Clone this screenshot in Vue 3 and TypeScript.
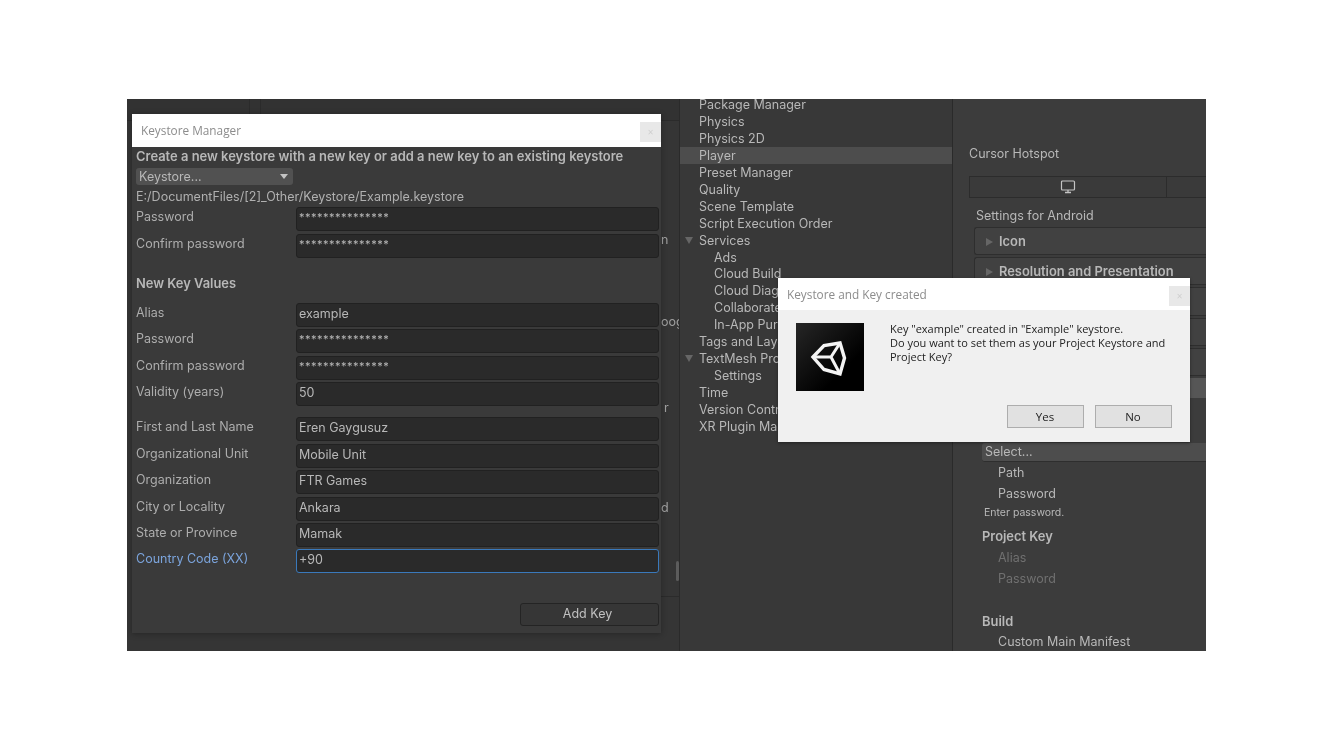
<script setup lang="ts">
interface FieldRow {
  label: string;
  value: string;
  focused?: boolean;
}

interface TreeItem {
  text: string;
  depth?: number;
  open?: boolean;
  selected?: boolean;
}

const stars = '***************';

const storeRows: FieldRow[] = [
  { label: 'Password', value: stars },
  { label: 'Confirm password', value: stars },
];

const keyRows: FieldRow[] = [
  { label: 'Alias', value: 'example' },
  { label: 'Password', value: stars },
  { label: 'Confirm password', value: stars },
  { label: 'Validity (years)', value: '50' },
];

const ownerRows: FieldRow[] = [
  { label: 'First and Last Name', value: 'Eren Gaygusuz' },
  { label: 'Organizational Unit', value: 'Mobile Unit' },
  { label: 'Organization', value: 'FTR Games' },
  { label: 'City or Locality', value: 'Ankara' },
  { label: 'State or Province', value: 'Mamak' },
  { label: 'Country Code (XX)', value: '+90', focused: true },
];

const tree: TreeItem[] = [
  { text: 'Package Manager' },
  { text: 'Physics' },
  { text: 'Physics 2D' },
  { text: 'Player', selected: true },
  { text: 'Preset Manager' },
  { text: 'Quality' },
  { text: 'Scene Template' },
  { text: 'Script Execution Order' },
  { text: 'Services', open: true },
  { text: 'Ads', depth: 1 },
  { text: 'Cloud Build', depth: 1 },
  { text: 'Cloud Diagnostics', depth: 1 },
  { text: 'Collaborate', depth: 1 },
  { text: 'In-App Purchasing', depth: 1 },
  { text: 'Tags and Layers' },
  { text: 'TextMesh Pro', open: true },
  { text: 'Settings', depth: 1 },
  { text: 'Time' },
  { text: 'Version Control' },
  { text: 'XR Plugin Management' },
];
</script>

<template>
  <div class="page">
    <div class="editor">
      <div class="left-pane">
        <div class="top-strip">
          <span class="top-gap"></span>
        </div>
        <div class="peek">
          <span class="peek-n">n</span>
          <span class="peek-oog">oog</span>
          <span class="peek-r">r</span>
          <span class="peek-d">d</span>
          <span class="peek-thumb"></span>
          <span class="peek-line"></span>
        </div>
      </div>

      <div class="tree">
        <div
          v-for="item in tree"
          :key="item.text"
          class="tree-row"
          :class="{ selected: item.selected, child: item.depth }"
        >
          <span v-if="item.open" class="tree-arrow"></span>
          {{ item.text }}
        </div>
      </div>

      <div class="inspector">
        <div class="hotspot">Cursor Hotspot</div>
        <div class="platform-tabs">
          <div class="platform-tab">
            <svg width="16" height="14" viewBox="0 0 16 14" fill="none">
              <rect x="1.5" y="1" width="13" height="9" rx="1" stroke="#c4c4c4" stroke-width="1.2" />
              <path d="M8 10v2M5 12.5h6" stroke="#c4c4c4" stroke-width="1.3" />
            </svg>
          </div>
          <div class="platform-tab-rest"></div>
        </div>
        <div class="settings-title">Settings for Android</div>
        <div class="foldout"><span class="fold-arrow"></span>Icon</div>
        <div class="foldout"><span class="fold-arrow"></span>Resolution and Presentation</div>
        <div class="foldout"></div>
        <div class="foldout"></div>
        <div class="foldout"></div>
        <div class="pub-head"></div>
        <div class="select-row">Select...</div>
        <div class="prop">Path</div>
        <div class="prop">Password</div>
        <div class="hint">Enter password.</div>
        <div class="sub-head">Project Key</div>
        <div class="prop disabled">Alias</div>
        <div class="prop disabled">Password</div>
        <div class="sub-head build">Build</div>
        <div class="prop">Custom Main Manifest</div>
      </div>

      <section class="keystore-window">
        <header class="title-bar">
          <span>Keystore Manager</span>
          <span class="close-btn">×</span>
        </header>
        <div class="keystore-body">
          <div class="heading">Create a new keystore with a new key or add a new key to an existing keystore</div>
          <div class="dropdown">
            <span>Keystore...</span>
            <span class="drop-arrow"></span>
          </div>
          <div class="path">E:/DocumentFiles/[2]_Other/Keystore/Example.keystore</div>

          <div v-for="row in storeRows" :key="row.label" class="row store">
            <label>{{ row.label }}</label>
            <div class="field stars">{{ row.value }}</div>
          </div>

          <div class="section-title">New Key Values</div>

          <div v-for="row in keyRows" :key="row.label" class="row">
            <label>{{ row.label }}</label>
            <div class="field" :class="{ stars: row.value === stars }">{{ row.value }}</div>
          </div>

          <div class="owner">
            <div
              v-for="row in ownerRows"
              :key="row.label"
              class="row"
              :class="{ focused: row.focused }"
            >
              <label>{{ row.label }}</label>
              <div class="field">{{ row.value }}</div>
            </div>
          </div>

          <div class="actions">
            <button class="add-key" type="button">Add Key</button>
          </div>
        </div>
      </section>

      <section class="created-dialog">
        <header class="dialog-title">
          <span>Keystore and Key created</span>
          <span class="close-btn">×</span>
        </header>
        <div class="dialog-body">
          <div class="dialog-main">
            <div class="unity-tile">
              <svg width="68" height="68" viewBox="0 0 68 68" fill="none">
                <path
                  d="M17 34L28 22.500L44 20L48.500 35L44 51L28 46.500Z"
                  stroke="#f4f4f4"
                  stroke-width="3.400"
                  stroke-linejoin="miter"
                />
                <path d="M17 34H35M35 34L44 20M35 34L44 51" stroke="#f4f4f4" stroke-width="3" />
              </svg>
            </div>
            <p class="dialog-text">
              Key "example" created in "Example" keystore.<br />
              Do you want to set them as your Project Keystore and Project Key?
            </p>
          </div>
          <div class="dialog-actions">
            <button type="button">Yes</button>
            <button type="button">No</button>
          </div>
        </div>
      </section>
    </div>
  </div>
</template>

<style>
html,
body {
  background: #fff;
}
</style>

<style scoped>
.page {
  height: 750px;
  padding: 99px 0 0 127px;
  box-sizing: border-box;
  background: #fff;
  font-family: Inter, "Liberation Sans", sans-serif;
  font-size: 12.500px;
  color: #b8b8b8;
}

.editor {
  position: relative;
  display: flex;
  width: 1079px;
  height: 552px;
  overflow: hidden;
  background: #383838;
  filter: blur(0.35px);
}

/* left pane, nearly all hidden by the keystore window */
.left-pane {
  display: flex;
  flex-direction: column;
  width: 553px;
  flex: none;
  box-sizing: border-box;
  border-right: 1px solid #2a2a2a;
  background: #353535;
}

.top-strip {
  height: 21px;
  border-bottom: 1px solid #2b2b2b;
  background: #323232;
}

.top-gap {
  display: block;
  width: 10px;
  height: 100%;
  margin-left: 122px;
  border-left: 1px solid #2b2b2b;
  border-right: 1px solid #2b2b2b;
}

.peek {
  position: relative;
  flex: 1;
  overflow: hidden;
}

.peek span {
  position: absolute;
  color: #a0a0a0;
  line-height: 17px;
}

.peek-n {
  top: 110px;
  left: 534px;
}

.peek-oog {
  top: 192px;
  left: 534px;
}

.peek-r {
  top: 278px;
  left: 537px;
}

.peek-d {
  top: 378px;
  left: 534px;
}

.peek .peek-thumb {
  top: 440px;
  left: 549px;
  width: 3px;
  height: 20px;
  border-radius: 2px;
  background: #5c5c5c;
}

.peek .peek-line {
  top: 475px;
  left: 534px;
  width: 18px;
  height: 1px;
  background: #2b2b2b;
}

/* settings tree */
.tree {
  width: 273px;
  flex: none;
  box-sizing: border-box;
  border-right: 1px solid #2a2a2a;
}

.tree-row {
  position: relative;
  height: 16.950px;
  padding-left: 19px;
  line-height: 17px;
  white-space: nowrap;
  overflow: hidden;
}

.tree-row:first-child {
  height: 14px;
  line-height: 11px;
}

.tree-row.child {
  padding-left: 34px;
}

.tree-row.selected {
  background: #4d4d4d;
}

.tree-arrow {
  position: absolute;
  top: 5px;
  left: 5px;
  border-style: solid;
  border-width: 7px 4px 0;
  border-color: #666 transparent transparent;
}

/* inspector */
.inspector {
  flex: 1;
  min-width: 0;
  padding-top: 46px;
  background: #3c3c3c;
  white-space: nowrap;
}

.hotspot {
  height: 17px;
  padding-left: 16px;
  line-height: 17px;
}

.platform-tabs {
  display: flex;
  height: 22px;
  margin: 14px 0 0 16px;
  border: 1px solid #2c2c2c;
  border-right: 0;
  box-sizing: border-box;
  background: #3a3a3a;
}

.platform-tab {
  display: flex;
  align-items: center;
  justify-content: center;
  width: 196px;
  border-right: 1px solid #2c2c2c;
}

.platform-tab-rest {
  flex: 1;
}

.settings-title {
  height: 29px;
  padding-left: 23px;
  line-height: 35px;
}

.foldout {
  height: 28.200px;
  margin: 0 0 2px 21px;
  padding-left: 11px;
  box-sizing: border-box;
  border: 1px solid #2e2e2e;
  border-right: 0;
  border-radius: 3px 0 0 3px;
  background: #414141;
  font-size: 12.900px;
  font-weight: 600;
  line-height: 27px;
}

.fold-arrow {
  display: inline-block;
  margin-right: 6px;
  border-style: solid;
  border-width: 4px 0 4px 7px;
  border-color: transparent transparent transparent #666;
}

.pub-head {
  height: 20px;
  margin-left: 21px;
  background: #565656;
}

.select-row {
  height: 19px;
  margin: 45px 0 0 29px;
  padding-left: 3px;
  box-sizing: border-box;
  border-bottom: 1px solid #2e2e2e;
  border-radius: 3px 0 0 3px;
  background: #4d4d4d;
  line-height: 17px;
}

.prop {
  height: 21px;
  padding-left: 45px;
  line-height: 21px;
}

.prop.disabled {
  color: #707070;
}

.hint {
  height: 17px;
  padding-left: 31px;
  font-size: 10.500px;
  line-height: 17px;
}

.sub-head {
  height: 21.500px;
  margin-top: 5px;
  padding-left: 29px;
  font-size: 12.900px;
  font-weight: 600;
  line-height: 21px;
}

.sub-head.build {
  height: 19.500px;
  margin-top: 22px;
}

/* floating keystore window */
.keystore-window {
  position: absolute;
  top: 15px;
  left: 5px;
  width: 529px;
  height: 519px;
  background: #3a3a3a;
  box-shadow: 0 1px 6px rgba(0, 0, 0, 0.3);
}

.title-bar {
  display: flex;
  justify-content: space-between;
  height: 33px;
  padding: 8px 0 0 9px;
  box-sizing: border-box;
  background: #fff;
  color: #8c8c8c;
  font-family: "Open Sans", "Noto Sans", sans-serif;
  font-size: 11.800px;
  line-height: 17px;
}

.close-btn {
  width: 21px;
  height: 20px;
  background: #e8e8e8;
  color: #cfcfcf;
  font-size: 10px;
  line-height: 20px;
  text-align: center;
}

.keystore-body {
  padding: 0 2px 0 4px;
}

.heading {
  height: 21px;
  font-size: 12.950px;
  font-weight: 600;
  line-height: 19px;
  white-space: nowrap;
}

.dropdown {
  display: flex;
  justify-content: space-between;
  align-items: center;
  width: 157px;
  height: 17px;
  padding: 0 5px 0 3px;
  box-sizing: border-box;
  border-radius: 3px;
  background: #515151;
  line-height: 17px;
}

.drop-arrow {
  border-style: solid;
  border-width: 5px 4.500px 0;
  border-color: #c4c4c4 transparent transparent;
}

.path {
  height: 22px;
  color: #b0b0b0;
  line-height: 23px;
  white-space: nowrap;
}

.row {
  display: flex;
  height: 26.400px;
}

.row.store {
  height: 27px;
}

.row label {
  width: 160px;
  flex: none;
  color: #adadad;
  line-height: 19px;
}

.field {
  width: 363px;
  height: 24px;
  box-sizing: border-box;
  padding-left: 2px;
  border: 1px solid #212121;
  border-radius: 3px;
  background: #2a2a2a;
  line-height: 20px;
}

.field.stars {
  font-size: 11px;
  line-height: 19px;
  letter-spacing: 0.5px;
}

.section-title {
  height: 41.800px;
  padding-top: 13px;
  box-sizing: border-box;
  font-size: 12.900px;
  font-weight: 600;
  line-height: 19px;
}

.owner {
  margin-top: 9px;
}

.row.focused label {
  color: #7ba4dc;
}

.row.focused .field {
  border-color: #3a79bb;
}

.actions {
  display: flex;
  justify-content: flex-end;
  margin-top: 27px;
}

.add-key {
  width: 139px;
  height: 23px;
  padding: 0 4px 1px 0;
  border: 1px solid #242424;
  border-radius: 3px;
  background: #363636;
  color: #c0c0c0;
  font: inherit;
}

/* modal dialog */
.created-dialog {
  position: absolute;
  top: 179px;
  left: 651px;
  width: 412px;
  height: 164px;
  background: #f0f0f0;
  box-shadow: 0 1px 3px rgba(0, 0, 0, 0.4);
  color: #222;
  font-family: "Open Sans", "Noto Sans", sans-serif;
}

.dialog-title {
  display: flex;
  justify-content: space-between;
  height: 32px;
  padding: 8px 0 0 9px;
  box-sizing: border-box;
  background: #fff;
  color: #8c8c8c;
  font-size: 11.800px;
  line-height: 17px;
}

.dialog-body {
  padding: 13px 18px 0;
}

.dialog-main {
  display: flex;
  gap: 26px;
}

.unity-tile {
  width: 68px;
  height: 68px;
  flex: none;
  background: linear-gradient(135deg, #262626, #000 70%);
}

.dialog-text {
  width: 290px;
  margin: -1px 0 0;
  font-size: 11px;
  line-height: 14px;
}

.dialog-actions {
  display: flex;
  justify-content: flex-end;
  gap: 11px;
  margin-top: 14px;
}

.dialog-actions button {
  width: 77px;
  height: 23px;
  padding: 0 1px 1px 0;
  border: 1px solid #adadad;
  background: #e1e1e1;
  color: #222;
  font: inherit;
  font-size: 11.500px;
}
</style>
